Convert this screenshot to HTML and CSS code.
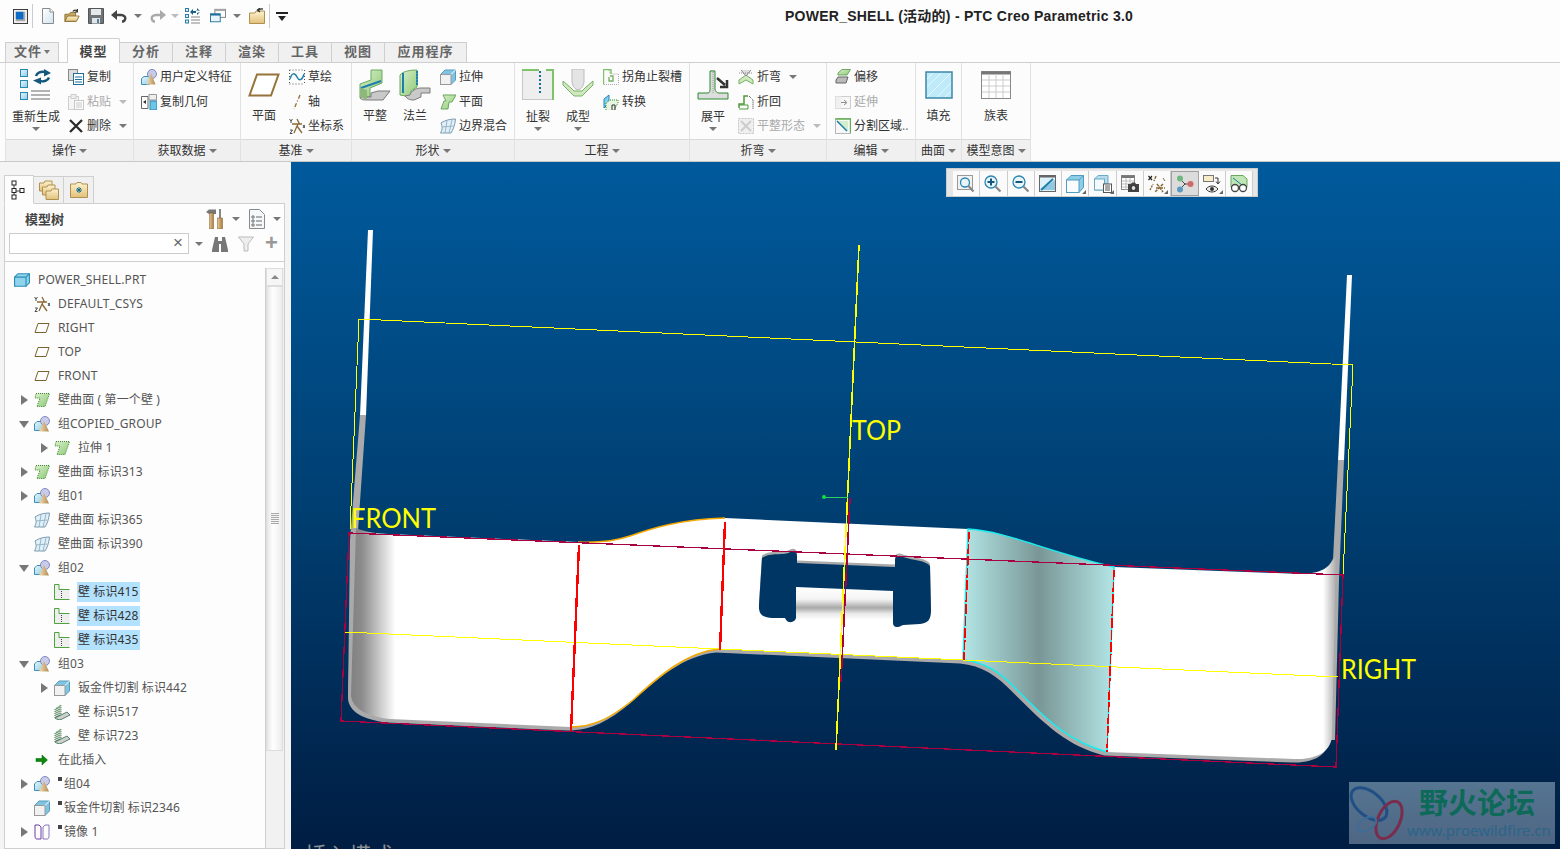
FILE: index.html
```html
<!DOCTYPE html>
<html lang="zh-CN">
<head>
<meta charset="utf-8">
<title>POWER_SHELL - PTC Creo Parametric 3.0</title>
<link rel="stylesheet" href="styles.css">
</head>
<body>
<svg class="defs" width="0" height="0" aria-hidden="true">
  <defs>
    <linearGradient id="gCube" x1="0" y1="0" x2="1" y2="1"><stop offset="0" stop-color="#e8f6fc"/><stop offset="1" stop-color="#8ecbe6"/></linearGradient>
    <linearGradient id="gFolder" x1="0" y1="0" x2="0" y2="1"><stop offset="0" stop-color="#fdf3d0"/><stop offset="1" stop-color="#e2c078"/></linearGradient>
    <linearGradient id="gGreen" x1="0" y1="0" x2="1" y2="1"><stop offset="0" stop-color="#d8f0c8"/><stop offset="1" stop-color="#8fc878"/></linearGradient>
    <linearGradient id="gCone" x1="0" y1="0" x2="1" y2="0"><stop offset="0" stop-color="#f4e0b8"/><stop offset="1" stop-color="#b08a50"/></linearGradient>
    <linearGradient id="gDoc" x1="0" y1="0" x2="1" y2="1"><stop offset="0" stop-color="#fff"/><stop offset="1" stop-color="#cfe4f0"/></linearGradient>
    <linearGradient id="gTool" x1="0" y1="0" x2="1" y2="0"><stop offset="0" stop-color="#e8c890"/><stop offset="1" stop-color="#a87c40"/></linearGradient>

    <symbol id="q-win" viewBox="0 0 16 16"><rect x=".5" y=".5" width="15" height="15" fill="#eee" stroke="#333"/><rect x="3" y="3" width="10" height="10" fill="#aaa"/><rect x="3" y="3" width="8" height="8" fill="#0a6cc8"/></symbol>
    <symbol id="q-new" viewBox="0 0 16 16"><path d="M2.5.5H10L13.5 4V15.5H2.5Z" fill="url(#gDoc)" stroke="#8a8a8a"/><path d="M10 .5V4H13.5" fill="#fff" stroke="#8a8a8a"/></symbol>
    <symbol id="q-open" viewBox="0 0 18 16"><path d="M1 6H6L7 4H13V14H1Z" fill="#c8a860" stroke="#8a6c30"/><path d="M1 14L4 8H17L14 14Z" fill="url(#gFolder)" stroke="#8a6c30"/><path d="M10 3C11 1 14 1 15 3M15 0V3.5H12" fill="none" stroke="#333" stroke-width="1.4"/></symbol>
    <symbol id="q-save" viewBox="0 0 16 16"><path d="M.5.5H15.5V15.5H.5Z" fill="#6f7478" stroke="#555"/><rect x="3" y="1" width="10" height="6" fill="#e6e9ec"/><rect x="4" y="10" width="8" height="5.5" fill="#dfe6ea"/><rect x="9" y="11" width="2" height="4" fill="#5a7f99"/></symbol>
    <symbol id="q-undo" viewBox="0 0 16 12"><path d="M4 5H10C13 5 15 7 14 9.500 13.500 11 12 11.500 11 11.500" fill="none" stroke="#444" stroke-width="2.400"/><path d="M6 0V10L0 5Z" fill="#444"/></symbol>
    <symbol id="q-redo" viewBox="0 0 16 12"><path d="M12 5H6C3 5 1 7 2 9.500 2.500 11 4 11.500 5 11.500" fill="none" stroke="#aaa" stroke-width="2.400"/><path d="M10 0V10L16 5Z" fill="#aaa"/></symbol>
    <symbol id="q-regen" viewBox="0 0 16 16"><g fill="#d6eef8" stroke="#2b7da8"><rect x=".5" y=".5" width="3" height="3"/><rect x=".5" y="6.500" width="3" height="3"/><rect x=".5" y="12" width="3" height="3"/></g><path d="M6 9H15M6 12H15M6 15H15" stroke="#888"/><path d="M5 4L8 1V3H11V5H8V7ZM15 3L12 0V2H10M15 4L12 7V5" fill="#1f5f85"/></symbol>
    <symbol id="q-wins" viewBox="0 0 18 16"><rect x="5.500" y=".5" width="12" height="9" fill="#fff" stroke="#777"/><rect x="5.500" y=".5" width="12" height="2" fill="#aaa"/><rect x=".5" y="5.500" width="11" height="9" fill="#e8f4fa" stroke="#1f6f9a"/><rect x=".5" y="5.500" width="11" height="2" fill="#1f6f9a"/></symbol>
    <symbol id="q-close" viewBox="0 0 16 16"><path d="M.5 5H6L7 3H15.500V15.500H.5Z" fill="url(#gFolder)" stroke="#b09050"/><path d="M9 3.500C9 1.500 11 .8 14 1M11 0L8.500 2L11 4" fill="none" stroke="#333" stroke-width="1.300"/></symbol>

    <symbol id="b-regen" viewBox="0 0 32 32"><g fill="url(#gCube)" stroke="#2b86b2"><rect x=".5" y=".5" width="7" height="7"/><rect x=".5" y="11.500" width="7" height="7"/><rect x=".5" y="23.500" width="7" height="7"/></g><path d="M11 22H30M11 26H30M11 30H30" stroke="#999" stroke-width="1.500"/><path d="M16 7C17 3.500 21 2 25 3M29 8.500C28 11.500 24 13 19 12" fill="none" stroke="#14587f" stroke-width="2.500"/><path d="M24 0L31 4 24 7.500ZM21 8.500L13 11.500 21 15.500Z" fill="#14587f"/></symbol>
    <symbol id="b-plane" viewBox="0 0 32 24"><path d="M9 1.500H30.500L23 22.500H1.500Z" fill="#fff" stroke="#96733a" stroke-width="2"/></symbol>
    <symbol id="b-flat" viewBox="0 0 32 32"><path d="M1 28V15L12 11V1H23V14L11 19V28Z" fill="url(#gGreen)" stroke="#6aa860"/><path d="M2 19L22 12" stroke="#1d7fb0" stroke-width="2"/><path d="M1 28C1 31 5 31 8 31H24L31 22H19L12 24V28Z" fill="#c9c9c9" stroke="#7a7a7a"/><path d="M1 19V28L8 31V21Z" fill="#8db87a"/></symbol>
    <symbol id="b-flange" viewBox="0 0 32 32"><path d="M1 26V6C4 2 12 1 18 1V18L12 22V28Z" fill="url(#gGreen)" stroke="#6aa860"/><path d="M4 4V24M18 2V16" stroke="#1d7fb0" stroke-width="2"/><path d="M6 27C9 31 12 31 15 31L22 28V24H31V19H22C17 19 12 22 11 26Z" fill="#c9c9c9" stroke="#7a7a7a"/><path d="M18 4V18" stroke="#7dbb6b" stroke-dasharray="1 2"/></symbol>
    <symbol id="b-rip" viewBox="0 0 32 32"><path d="M.5 1.500V30.500H30.500V1.500" fill="#eee" stroke="#999" stroke-dasharray="1 1"/><path d="M0 1H17M24 1H31V31" fill="none" stroke="#7ec26a" stroke-width="2"/><path d="M18 2V26" stroke="#16708f" stroke-width="2" stroke-dasharray="2 2"/></symbol>
    <symbol id="b-form" viewBox="0 0 32 32"><path d="M10 0H22V13C21 18 19 20 16 21 13 20 11 18 10 13Z" fill="#e4e4e4" stroke="#bbb"/><path d="M1 12L9 19 12 22H20L23 19 31 12V16L23 24 20 27H12L9 24 1 16Z" fill="#cfe8bf" stroke="#76b265"/></symbol>
    <symbol id="b-unbend" viewBox="0 0 32 32"><path d="M13 1H18V20C18 22 20 24 22 24H31V30H1V24H10C12 24 13 23 13 21Z" fill="#ddd"/><path d="M1 24H11C13 24 13 21 13 20V2H18V20C18 22 20 24 22 24H31M1 30H31V24M1 24V30" fill="none" stroke="#2f8a35"/><path d="M16 3V24" stroke="#999" stroke-dasharray="1 1"/><path d="M20 9L28 16M30 11V18H23" fill="none" stroke="#333" stroke-width="2.500"/></symbol>
    <symbol id="b-fill" viewBox="0 0 28 28"><rect x="1" y="1" width="26" height="26" fill="#bfeaf8" stroke="#3c87a8" stroke-width="1.500"/><path d="M2 26L26 2M2 16L16 2M12 26L26 12M2 8L8 2M20 26L26 20" stroke="#e6f8fd"/></symbol>
    <symbol id="b-table" viewBox="0 0 30 28"><rect x=".5" y=".5" width="29" height="27" fill="#fff" stroke="#888"/><rect x=".5" y=".5" width="29" height="3" fill="#777"/><path d="M8 3V27M15 3V27M22 3V27M1 9H29M1 15H29M1 21H29" stroke="#ccc"/></symbol>

    <symbol id="s-copy" viewBox="0 0 16 16"><rect x=".5" y=".5" width="9" height="11" fill="#ddd" stroke="#888"/><rect x="5.500" y="4.500" width="10" height="11" fill="#fff" stroke="#1f6f9a"/><path d="M7 8H14M7 10.500H14M7 13H14" stroke="#1f6f9a"/></symbol>
    <symbol id="s-paste" viewBox="0 0 16 16" opacity=".45"><rect x=".5" y="2.500" width="10" height="13" fill="#eee" stroke="#999"/><rect x="3" y=".5" width="5" height="4" fill="#ddd" stroke="#999"/><rect x="6.500" y="6.500" width="9" height="9" fill="#fff" stroke="#888"/><path d="M8 9H14M8 11H14M8 13H14" stroke="#888"/></symbol>
    <symbol id="s-del" viewBox="0 0 16 16"><path d="M2 2L14 14M14 2L2 14" stroke="#2b2b2b" stroke-width="2.300"/></symbol>
    <symbol id="s-udf" viewBox="0 0 16 16"><path d="M.5 9.500L3 7.500H11V13.500L8 15.500H.5Z" fill="url(#gCube)" stroke="#3a8fb8"/><circle cx="11" cy="5" r="4.500" fill="#c8cbe8" stroke="#8088c0"/><path d="M10 4L5.500 15.500H14.500Z" fill="url(#gCone)"/></symbol>
    <symbol id="s-cgeo" viewBox="0 0 16 16"><path d="M.5 2.500H7V14.500H.5Z" fill="#fff" stroke="#666"/><path d="M2 8L5 6V10Z" fill="#333"/><path d="M8 .5H15.500V6H8Z" fill="#eee" stroke="#999"/><rect x="9" y="7" width="7" height="9" fill="#6cc6e8" stroke="#2b86b2"/></symbol>
    <symbol id="s-sketch" viewBox="0 0 16 16"><path d="M1 10C3 3 6 4 8 8 10 12 13 12 15 5" fill="none" stroke="#1f7ea8" stroke-width="1.500"/><path d="M.5 1H15.500M.5 15H15.500" stroke="#555" stroke-dasharray="1 2"/><path d="M.5 1V15M15.500 1V15" stroke="#555" stroke-dasharray="1 2"/></symbol>
    <symbol id="s-axis" viewBox="0 0 16 16"><path d="M11 1L5 15" stroke="#96733a" stroke-width="1.400" stroke-dasharray="4 2 1 2"/></symbol>
    <symbol id="s-csys" viewBox="0 0 16 16"><path d="M8 1L10 5 8 8 5 15M8 8L13 15M3 6H13" fill="none" stroke="#8a6a34" stroke-width="1.300"/><path d="M.5 1L2 3 3.500 1M2 3V5M14 7L16 10M16 7L14 10M1 12H3.500L1 15.500H3.500" fill="none" stroke="#222" stroke-width=".8"/></symbol>
    <symbol id="s-ext" viewBox="0 0 16 16"><path d="M.5 5.500L5 1H15.500V11L11 15.500H.5Z" fill="#7fc4e0" stroke="#5a9cbc"/><rect x=".5" y="5.500" width="10.500" height="10" fill="#f1f1f1" stroke="#999"/><path d="M11 5.500L15.500 1" stroke="#fff"/></symbol>
    <symbol id="s-pln" viewBox="0 0 16 16"><path d="M3 1H16L12 8H9L8 15H1L4 7H6Z" fill="url(#gGreen)" stroke="#69a85c"/></symbol>
    <symbol id="s-bnd" viewBox="0 0 16 16"><path d="M1 5C5 2 11 1 15.500 1 15 7 13 12 11 15 7 15 3 15 .5 15 3 11 2 8 1 5Z" fill="#e0f0fa" stroke="#7a9aae"/><path d="M7 3L5 15M12 2L9 15M2 9L13 8" stroke="#9ab6c6"/></symbol>
    <symbol id="s-corner" viewBox="0 0 16 16"><path d="M.5.5H6V3L10 5H15.500V15.500H.5Z" fill="#fafafa" stroke="#aaa" stroke-dasharray="1 1"/><path d="M.5.5H8V5M.5.5V15.500" fill="none" stroke="#7ec26a" stroke-width="1.400"/><path d="M6 8V12H10V7H7" fill="none" stroke="#76ad5f" stroke-width="1.300"/></symbol>
    <symbol id="s-conv" viewBox="0 0 16 16"><path d="M1 5L6 1V9L1 14Z" fill="#7fd0ee" stroke="#2b86b2"/><path d="M3 16V9L7 6H15V9L11 16" fill="#e8f5e0" stroke="#2f8a35" stroke-dasharray="1 1"/><path d="M9 16V11H12V16" fill="none" stroke="#333"/></symbol>
    <symbol id="s-bend" viewBox="0 0 16 16"><path d="M1 15V11L8 6 15 11V15L8 11Z" fill="#cfe8bf" stroke="#76b265"/><path d="M3 1L8 7 13 1" fill="#ddd" stroke="#888"/><path d="M1 4L15 4" stroke="#888" stroke-dasharray="1 1"/></symbol>
    <symbol id="s-back" viewBox="0 0 16 16"><path d="M1 14V10H6V2H10" fill="none" stroke="#4d9b3c" stroke-width="1.500"/><path d="M1 15H10V11H1" fill="none" stroke="#4d9b3c"/><path d="M11 2L15 6V15" fill="none" stroke="#333" stroke-dasharray="1 1"/></symbol>
    <symbol id="s-flatst" viewBox="0 0 16 16" opacity=".4"><rect x=".5" y=".5" width="15" height="15" fill="#ddd" stroke="#777" stroke-dasharray="2 1"/><path d="M3 3L13 13M13 3L3 13" stroke="#888" stroke-width="2"/></symbol>
    <symbol id="s-offset" viewBox="0 0 16 16"><path d="M3 4L7 .5H15.500L12 6H3Z" fill="url(#gGreen)" stroke="#6aa860"/><path d="M1 11L3 8H13L11 14H1Z" fill="#bbb" stroke="#666"/></symbol>
    <symbol id="s-extend" viewBox="0 0 16 16" opacity=".55"><rect x=".5" y="2.500" width="15" height="12" fill="#f4f4f4" stroke="#aaa"/><rect x=".5" y="2.500" width="6" height="12" fill="#e8e8e8"/><path d="M6 8.500H11M9 6L12 8.500 9 11" fill="none" stroke="#333"/></symbol>
    <symbol id="s-split" viewBox="0 0 16 16"><rect x=".5" y=".5" width="15" height="15" fill="#f7f7f7" stroke="#777" stroke-dasharray="1 1"/><path d="M.5 1H15.500V15" fill="none" stroke="#62b050" stroke-width="1.400"/><path d="M3 3H13V13Z" fill="#c3e8bb" opacity=".7"/><path d="M2 3L12 13" stroke="#1a7da3" stroke-width="1.500"/></symbol>

    <symbol id="p-tree" viewBox="0 0 16 20"><path d="M3 5V17M3 11H9" stroke="#444"/><g fill="#fff" stroke="#222"><rect x="1" y="1" width="4" height="4"/><rect x="1" y="8.500" width="4" height="4"/><rect x="1" y="15" width="4" height="4"/><rect x="9" y="8.500" width="4" height="4"/></g></symbol>
    <symbol id="p-folders" viewBox="0 0 20 20"><path d="M.5 3H5L6 1H13V11H.5Z" fill="url(#gFolder)" stroke="#b09050"/><path d="M3.500 7H8L9 5H16V15H3.500Z" fill="url(#gFolder)" stroke="#b09050"/><path d="M7 11H12L13 9H19.500V19.500H7Z" fill="url(#gFolder)" stroke="#b09050"/></symbol>
    <symbol id="p-fav" viewBox="0 0 18 16"><path d="M.5 2H6L7 .5H11L12 2H17.500V15.500H.5Z" fill="url(#gFolder)" stroke="#b09050"/><path d="M9 5V11M6 8H12M7 6L11 10M11 6L7 10" stroke="#136a8a"/></symbol>
    <symbol id="p-tools" viewBox="0 0 18 20"><path d="M0 3L3 .5H10V5H3Z" fill="#777"/><rect x="3.500" y="4" width="4" height="16" fill="url(#gTool)" stroke="#7a5a28" stroke-width=".5"/><rect x="13" y="0" width="2" height="9" fill="#888"/><rect x="11.500" y="9" width="5" height="11" fill="url(#gTool)" stroke="#7a5a28" stroke-width=".5"/></symbol>
    <symbol id="p-notes" viewBox="0 0 16 20"><path d="M.5.5H10.500L15.500 5.500V19.500H.5Z" fill="#f4f8fb" stroke="#8a8a8a"/><g fill="none" stroke="#666"><circle cx="4" cy="8" r="1.200"/><circle cx="4" cy="12" r="1.200"/><circle cx="4" cy="16" r="1.200"/><path d="M7 8H13M7 12H13M7 16H13"/></g></symbol>
    <symbol id="p-bino" viewBox="0 0 16 16"><path d="M3 1H6V5H10V1H13L16 14V16H9V8H7V16H0V14Z" fill="#777"/></symbol>
    <symbol id="p-filter" viewBox="0 0 16 16"><path d="M.5 1H15.500L10 8V15L6 15V8Z" fill="#eee" stroke="#bbb"/></symbol>

    <symbol id="t-part" viewBox="0 0 14 12"><path d="M.5 3.500L3.500.5H13.500V8.500L10.500 11.500H.5Z" fill="#8fd4ec" stroke="#2c8db5"/><path d="M.5 3.500H10.500V11.500M10.500 3.500L13.500.5" fill="none" stroke="#2c8db5"/></symbol>
    <symbol id="t-plane" viewBox="0 0 16 10"><path d="M4 .5H15L12 9.500H1Z" fill="#fdfdfd" stroke="#7a6230"/></symbol>
    <symbol id="t-wall" viewBox="0 0 16 14"><path d="M2 .5H15.500L11 13.500H3L6 5H1Z" fill="url(#gGreen)" stroke="#3c8a30" stroke-dasharray="1 1"/></symbol>
    <symbol id="t-grp" viewBox="0 0 16 16"><path d="M.5 8L3 5.500H10V12L7.500 14.500H.5Z" fill="url(#gCube)" stroke="#3a8fb8"/><circle cx="11" cy="5" r="4.500" fill="#c8cbe8" stroke="#8088c0"/><path d="M10 5L5 15.500H15Z" fill="url(#gCone)"/></symbol>
    <symbol id="t-flat" viewBox="0 0 16 16"><path d="M.5.5H4.500V5H15.500V15.500H.5Z" fill="#eee"/><path d="M.5 15.500V.5H5V5.500H15.500M.5 15.500H15.500" fill="none" stroke="#4da43a"/><path d="M7.500 7V15" stroke="#444" stroke-dasharray="1 1"/></symbol>
    <symbol id="t-w2" viewBox="0 0 16 16"><path d="M1 14V5L7 1V11L1 14Z" fill="#c8d0c4" stroke="#3f7f4a" stroke-dasharray="1 1"/><path d="M1 14C3 15.500 5 16 7 15.500L16 11 13 8 7 11Z" fill="#cfcfcf" stroke="#55806a"/><path d="M3 4V13M5 3V12" stroke="#2f7a48" stroke-dasharray="1 1"/></symbol>
    <symbol id="t-arrow" viewBox="-2 -2 16 16"><path d="M0 4.500H6V1L11.500 6 6 11V7.500H0Z" fill="#0a8a0a" stroke="#055a05" stroke-width=".5"/></symbol>
    <symbol id="t-mirror" viewBox="0 0 16 16"><path d="M1 1H5L7 3V15H2.500C1.500 15 1 13 1 12Z" fill="none" stroke="#6d3aa8"/><path d="M15 1H11L9 3V15H13.500C14.500 15 15 13 15 12Z" fill="none" stroke="#8a74c0"/></symbol>

    <symbol id="v-fit" viewBox="0 0 18 18"><rect x=".5" y=".5" width="15" height="14" fill="#f2f2f2" stroke="#999"/><circle cx="8" cy="7.500" r="4.500" fill="#e8f6fc" stroke="#2b86b2" stroke-width="1.300"/><path d="M11.500 11L16.500 16.500" stroke="#888" stroke-width="2.200"/></symbol>
    <symbol id="v-in" viewBox="0 0 18 18"><circle cx="7" cy="7" r="6" fill="#e8f6fc" stroke="#2b86b2" stroke-width="1.300"/><path d="M3.500 7H10.500M7 3.500V10.500" stroke="#14587f" stroke-width="2"/><path d="M11.500 11.500L16.500 16.500" stroke="#888" stroke-width="2.200"/></symbol>
    <symbol id="v-out" viewBox="0 0 18 18"><circle cx="7" cy="7" r="6" fill="#e8f6fc" stroke="#2b86b2" stroke-width="1.300"/><path d="M3.500 7H10.500" stroke="#14587f" stroke-width="2"/><path d="M11.500 11.500L16.500 16.500" stroke="#888" stroke-width="2.200"/></symbol>
    <symbol id="v-rep" viewBox="0 0 18 18"><rect x=".5" y=".5" width="16" height="16" fill="#dff1f8" stroke="#666"/><rect x=".5" y=".5" width="16" height="2" fill="#666"/><path d="M2 15H16V5" fill="#4ca6cc" opacity=".55"/><path d="M2 15L14 4" stroke="#1f7ea8" stroke-width="2"/></symbol>
    <symbol id="v-cube" viewBox="0 0 18 18"><path d="M.5 5L5 .5H17.500V12.500L13 17.500H.5Z" fill="#8fcde6" stroke="#4e9cbf"/><rect x=".5" y="5" width="12.500" height="12.500" fill="#f8fcfd" stroke="#4e9cbf"/><path d="M13 5L17.500 .5" stroke="#4e9cbf"/></symbol>
    <symbol id="v-cubel" viewBox="0 0 18 18"><path d="M.5 4L4 .5H14V9H10V15H.5Z" fill="#b4dcec" stroke="#6aaac6"/><rect x=".5" y="4" width="10" height="11" fill="#f4fafc" stroke="#6aaac6"/><rect x="9.500" y="9" width="8" height="8.500" fill="#fff" stroke="#555"/><path d="M11 11H16M11 13H16M11 15H16" stroke="#555"/></symbol>
    <symbol id="v-cam" viewBox="0 0 18 18"><rect x=".5" y=".5" width="13" height="14" fill="#fff" stroke="#888"/><rect x=".5" y=".5" width="13" height="2.500" fill="#777"/><path d="M1 6H13M1 9H13M1 12H13M5 3V15M9 3V15" stroke="#bbb"/><path d="M7 9H10L11 7.500H14L15 9H18V17H7Z" fill="#444"/><circle cx="12.500" cy="13" r="2.500" fill="#ddd" stroke="#222"/></symbol>
    <symbol id="v-dat" viewBox="0 0 18 18"><path d="M8 1L6 6M15 9L7 17M9 9L15 17M8 13H17" stroke="#8a6a34" stroke-width="1.500" stroke-dasharray="3 1"/><path d="M.5 1L4 5M4 1L.5 5" stroke="#222" stroke-width="1.200"/><path d="M15 3L17 6" stroke="#8a6a34"/><path d="M2 15L5 9" stroke="#8a6a34" stroke-width="1.400" stroke-dasharray="2 1"/></symbol>
    <symbol id="v-node" viewBox="0 0 18 18"><path d="M4 4L9 9 14 9M4 14L9 9" stroke="#444" fill="none"/><circle cx="4" cy="3.500" r="3" fill="#6db87a"/><circle cx="14.500" cy="9" r="3" fill="#cf6a6a"/><circle cx="4" cy="14.500" r="3" fill="#5a9ac0"/></symbol>
    <symbol id="v-eye" viewBox="0 0 18 18"><rect x=".5" y=".5" width="10" height="6" fill="#f7edc8" stroke="#777"/><path d="M12 3H15V8M13 6.500L15 9 17 6.500" fill="none" stroke="#333"/><path d="M3 14C6 10 12 10 15 14 12 18 6 18 3 14Z" fill="#eee" stroke="#333"/><circle cx="9" cy="14" r="2" fill="#333"/></symbol>
    <symbol id="v-glass" viewBox="0 0 18 18"><path d="M1 .5H13L17 4V12H1Z" fill="#bfe6b4" stroke="#6aa860"/><path d="M3 3L12 10" stroke="#1a7da3"/><g fill="#fff" stroke="#444" stroke-width="1.300"><circle cx="5" cy="13" r="3.500"/><circle cx="13" cy="13" r="3.500"/></g></symbol>
  </defs>
</svg>

<header class="titlebar">
  <div class="quick">
    <span class="qb"><svg class="i15"><use href="#q-win"/></svg></span>
    <span class="qsep"></span>
    <span class="qb qaft"><svg class="i16"><use href="#q-new"/></svg></span>
    <span class="qb"><svg class="i16"><use href="#q-open"/></svg></span>
    <span class="qb"><svg class="i16"><use href="#q-save"/></svg></span>
    <span class="qb qn"><svg class="i16"><use href="#q-undo"/></svg></span>
    <span class="qc qa"><i class="caret"></i></span>
    <span class="qb qn qm"><svg class="i16"><use href="#q-redo"/></svg></span>
    <span class="qc qs"><i class="caret lite"></i></span>
    <span class="qb"><svg class="i16"><use href="#q-regen"/></svg></span>
    <span class="qb qm"><svg class="i16"><use href="#q-wins"/></svg></span>
    <span class="qc"><i class="caret"></i></span>
    <span class="qb qm"><svg class="i16"><use href="#q-close"/></svg></span>
    <span class="qsep"></span>
    <span class="qc qlast"><i class="caret dark"></i></span>
  </div>
  <div class="title">POWER_SHELL (活动的) - PTC Creo Parametric 3.0</div>
</header>

<nav class="tabs">
  <div class="tab file">文件<i class="caret"></i></div>
  <div class="tab active">模型</div>
  <div class="tab">分析</div>
  <div class="tab">注释</div>
  <div class="tab">渲染</div>
  <div class="tab">工具</div>
  <div class="tab">视图</div>
  <div class="tab wide">应用程序</div>
</nav>

<section class="ribbon">
  <div class="group">
    <div class="tools">
      <div class="big w48"><div class="big-ico"><svg class="i32"><use href="#b-regen"/></svg></div><span>重新生成</span><i class="caret"></i></div>
      <div class="col">
        <div class="sm"><svg class="i16"><use href="#s-copy"/></svg>复制</div>
        <div class="sm off"><svg class="i16"><use href="#s-paste"/></svg>粘贴<i class="caret lite"></i></div>
        <div class="sm"><svg class="i16"><use href="#s-del"/></svg>删除<i class="caret"></i></div>
      </div>
    </div>
    <div class="glabel">操作<i class="caret"></i></div>
  </div>
  <div class="group">
    <div class="tools pl8">
      <div class="col">
        <div class="sm"><svg class="i16"><use href="#s-udf"/></svg>用户定义特征</div>
        <div class="sm"><svg class="i16"><use href="#s-cgeo"/></svg>复制几何</div>
      </div>
    </div>
    <div class="glabel">获取数据<i class="caret"></i></div>
  </div>
  <div class="group">
    <div class="tools pl8">
      <div class="big w32"><div class="big-ico"><svg class="i32x24"><use href="#b-plane"/></svg></div><span class="up">平面</span></div>
      <div class="col">
        <div class="sm"><svg class="i16"><use href="#s-sketch"/></svg>草绘</div>
        <div class="sm"><svg class="i16"><use href="#s-axis"/></svg>轴</div>
        <div class="sm"><svg class="i16"><use href="#s-csys"/></svg>坐标系</div>
      </div>
    </div>
    <div class="glabel">基准<i class="caret"></i></div>
  </div>
  <div class="group">
    <div class="tools pl8">
      <div class="big w32"><div class="big-ico"><svg class="i32"><use href="#b-flat"/></svg></div><span class="up">平整</span></div>
      <div class="big w32 ml8"><div class="big-ico"><svg class="i32"><use href="#b-flange"/></svg></div><span class="up">法兰</span></div>
      <div class="col">
        <div class="sm"><svg class="i16"><use href="#s-ext"/></svg>拉伸</div>
        <div class="sm"><svg class="i16"><use href="#s-pln"/></svg>平面</div>
        <div class="sm"><svg class="i16"><use href="#s-bnd"/></svg>边界混合</div>
      </div>
    </div>
    <div class="glabel">形状<i class="caret"></i></div>
  </div>
  <div class="group">
    <div class="tools pl8">
      <div class="big w32"><div class="big-ico"><svg class="i32"><use href="#b-rip"/></svg></div><span>扯裂</span><i class="caret"></i></div>
      <div class="big w32 ml8"><div class="big-ico"><svg class="i32"><use href="#b-form"/></svg></div><span>成型</span><i class="caret"></i></div>
      <div class="col">
        <div class="sm"><svg class="i16"><use href="#s-corner"/></svg>拐角止裂槽</div>
        <div class="sm"><svg class="i16"><use href="#s-conv"/></svg>转换</div>
      </div>
    </div>
    <div class="glabel">工程<i class="caret"></i></div>
  </div>
  <div class="group">
    <div class="tools pl8">
      <div class="big w32"><div class="big-ico"><svg class="i32"><use href="#b-unbend"/></svg></div><span>展平</span><i class="caret"></i></div>
      <div class="col">
        <div class="sm"><svg class="i16"><use href="#s-bend"/></svg>折弯<i class="caret"></i></div>
        <div class="sm"><svg class="i16"><use href="#s-back"/></svg>折回</div>
        <div class="sm off"><svg class="i16"><use href="#s-flatst"/></svg>平整形态<i class="caret lite"></i></div>
      </div>
    </div>
    <div class="glabel">折弯<i class="caret"></i></div>
  </div>
  <div class="group">
    <div class="tools pl8">
      <div class="col flush">
        <div class="sm"><svg class="i16"><use href="#s-offset"/></svg>偏移</div>
        <div class="sm off"><svg class="i16"><use href="#s-extend"/></svg>延伸</div>
        <div class="sm"><svg class="i16"><use href="#s-split"/></svg>分割区域<span class="dots">..</span></div>
      </div>
    </div>
    <div class="glabel">编辑<i class="caret"></i></div>
  </div>
  <div class="group">
    <div class="tools center">
      <div class="big w32"><div class="big-ico"><svg class="i28"><use href="#b-fill"/></svg></div><span class="up">填充</span></div>
    </div>
    <div class="glabel">曲面<i class="caret"></i></div>
  </div>
  <div class="group">
    <div class="tools center">
      <div class="big w32"><div class="big-ico"><svg class="i30x28"><use href="#b-table"/></svg></div><span class="up">族表</span></div>
    </div>
    <div class="glabel">模型意图<i class="caret"></i></div>
  </div>
</section>

<main class="main">
  <aside class="sidebar">
    <div class="ptabs">
      <div class="ptab on"><svg class="i16x20"><use href="#p-tree"/></svg></div>
      <div class="ptab"><svg class="i20"><use href="#p-folders"/></svg></div>
      <div class="ptab"><svg class="i18x16"><use href="#p-fav"/></svg></div>
    </div>
    <div class="panel">
      <div class="phead">
        <span class="ptitle">模型树</span>
        <svg class="i18x20"><use href="#p-tools"/></svg><i class="caret hc1"></i>
        <svg class="i16x20 hn"><use href="#p-notes"/></svg><i class="caret hc2"></i>
      </div>
      <div class="psearch">
        <div class="sbox"><span class="sx">×</span></div>
        <i class="caret sc"></i>
        <svg class="i16 sb"><use href="#p-bino"/></svg>
        <svg class="i16 sf"><use href="#p-filter"/></svg>
        <span class="splus">+</span>
      </div>
      <div class="pbody">
        <div class="tree">
          <div class="row l0"><svg class="ti"><use href="#t-part"/></svg><span class="tx">POWER_SHELL.PRT</span></div>
          <div class="row l1"><i class="ar"></i><svg class="ti"><use href="#s-csys"/></svg><span class="tx">DEFAULT_CSYS</span></div>
          <div class="row l1"><i class="ar"></i><svg class="ti"><use href="#t-plane"/></svg><span class="tx">RIGHT</span></div>
          <div class="row l1"><i class="ar"></i><svg class="ti"><use href="#t-plane"/></svg><span class="tx">TOP</span></div>
          <div class="row l1"><i class="ar"></i><svg class="ti"><use href="#t-plane"/></svg><span class="tx">FRONT</span></div>
          <div class="row l1"><i class="ar r"></i><svg class="ti"><use href="#t-wall"/></svg><span class="tx">壁曲面 ( 第一个壁 )</span></div>
          <div class="row l1"><i class="ar d"></i><svg class="ti"><use href="#t-grp"/></svg><span class="tx">组COPIED_GROUP</span></div>
          <div class="row l2"><i class="ar r"></i><svg class="ti"><use href="#t-wall"/></svg><span class="tx">拉伸 1</span></div>
          <div class="row l1"><i class="ar r"></i><svg class="ti"><use href="#t-wall"/></svg><span class="tx">壁曲面 标识313</span></div>
          <div class="row l1"><i class="ar r"></i><svg class="ti"><use href="#t-grp"/></svg><span class="tx">组01</span></div>
          <div class="row l1"><i class="ar"></i><svg class="ti"><use href="#s-bnd"/></svg><span class="tx">壁曲面 标识365</span></div>
          <div class="row l1"><i class="ar"></i><svg class="ti"><use href="#s-bnd"/></svg><span class="tx">壁曲面 标识390</span></div>
          <div class="row l1"><i class="ar d"></i><svg class="ti"><use href="#t-grp"/></svg><span class="tx">组02</span></div>
          <div class="row l2"><i class="ar"></i><svg class="ti"><use href="#t-flat"/></svg><span class="tx sel">壁 标识415</span></div>
          <div class="row l2"><i class="ar"></i><svg class="ti"><use href="#t-flat"/></svg><span class="tx sel">壁 标识428</span></div>
          <div class="row l2"><i class="ar"></i><svg class="ti"><use href="#t-flat"/></svg><span class="tx sel">壁 标识435</span></div>
          <div class="row l1"><i class="ar d"></i><svg class="ti"><use href="#t-grp"/></svg><span class="tx">组03</span></div>
          <div class="row l2"><i class="ar r"></i><svg class="ti"><use href="#s-ext"/></svg><span class="tx">钣金件切割 标识442</span></div>
          <div class="row l2"><i class="ar"></i><svg class="ti"><use href="#t-w2"/></svg><span class="tx">壁 标识517</span></div>
          <div class="row l2"><i class="ar"></i><svg class="ti"><use href="#t-w2"/></svg><span class="tx">壁 标识723</span></div>
          <div class="row l1"><i class="ar"></i><svg class="ti"><use href="#t-arrow"/></svg><span class="tx">在此插入</span></div>
          <div class="row l1"><i class="ar r"></i><svg class="ti"><use href="#t-grp"/></svg><span class="tx"><b class="mk"></b>组04</span></div>
          <div class="row l1"><i class="ar"></i><svg class="ti"><use href="#s-ext"/></svg><span class="tx"><b class="mk"></b>钣金件切割 标识2346</span></div>
          <div class="row l1"><i class="ar r"></i><svg class="ti"><use href="#t-mirror"/></svg><span class="tx"><b class="mk"></b>镜像 1</span></div>
          <div class="row l1"><i class="ar"></i><svg class="ti"><use href="#t-grp"/></svg></div>
        </div>
        <div class="scroll">
          <div class="sup"><i class="caret upw"></i></div>
          <div class="sthumb"><span class="grip"></span></div>
        </div>
      </div>
    </div>
  </aside>

  <div class="viewport">
    <svg class="canvas" viewBox="291 162 1269 687">
      <defs>
        <linearGradient id="sheetG" gradientUnits="userSpaceOnUse" x1="350" y1="0" x2="1338" y2="0">
          <stop offset="0" stop-color="#808080"/><stop offset=".012" stop-color="#8c8c8c"/><stop offset=".046" stop-color="#ffffff"/><stop offset=".985" stop-color="#ffffff"/><stop offset="1" stop-color="#a0a0a0"/>
        </linearGradient>
        <linearGradient id="tealG" gradientUnits="userSpaceOnUse" x1="965" y1="0" x2="1113" y2="0">
          <stop offset="0" stop-color="#b2e4e4"/><stop offset=".5" stop-color="#7a9696"/><stop offset="1" stop-color="#b2e4e4"/>
        </linearGradient>
        <linearGradient id="barG" gradientUnits="userSpaceOnUse" x1="0" y1="588" x2="0" y2="620">
          <stop offset="0" stop-color="#fff"/><stop offset=".35" stop-color="#f4f4f4"/><stop offset=".62" stop-color="#a8a8a8"/><stop offset=".8" stop-color="#e8e8e8"/><stop offset="1" stop-color="#fff"/>
        </linearGradient>
        <path id="sheet" d="M356 528C360 530 370 533 388 534L578 542C600 543 615 541 630 536C650 529 680 519 725 518L968 529C1010 532 1040 550 1114 567L1300 574C1320 574 1330 568 1336 555L1332 735C1332 750 1318 760 1295 759L1107 752C1070 742 1050 723 1017 690C1000 672 985 662 963 660L719 649C687 652 660 675 633 700C612 717 595 727 570 727L390 719C365 716 352 708 351 695Z"/>
        <path id="hole" d="M762 558C770 552 785 556 790 552C794 550 797 552 797 556V563L895 567V560C895 556 899 555 903 557C915 561 925 560 930 566L931 610C931 620 928 623 920 624L903 625C898 628 893 628 893 623V591L796 587V618C795 623 787 624 785 618C770 618 758 620 759 605Z"/>
      </defs>

      <polygon class="wall-w" points="368,230 373,230 366,416 360,416"/>
      <polygon class="wall-g" points="360,415 366,415 356,560 355,697 348,697 350,540"/>
      <polygon class="wall-w" points="1347,275 1352,275 1344,461 1338,461"/>
      <polygon class="wall-g" points="1338,460 1344,460 1339,580 1335,740 1327,740 1332,580"/>

      <use href="#sheet" class="rim" transform="translate(-3 3.500)"/>
      <use href="#sheet" class="sheet"/>
      <path class="teal" d="M968 529C1010 532 1040 550 1114 567L1107 752C1070 742 1050 723 1017 690C1000 672 985 662 963 660Z"/>
      <use href="#hole" class="rim" transform="translate(0 -2.500)"/>
      <polygon class="bar" points="796,587 893,591 893,623 795,619"/>
      <use href="#hole" class="holefill"/>

      <path class="orange" d="M578 542C600 543 615 541 630 536C650 529 680 519 725 518M719 649C687 652 660 675 633 700C612 717 595 727 570 727"/>
      <g class="crisp">
        <path class="ln yl" d="M359 319L1353 365M359 319L350 530M1353 365L1343 575"/>
        <path class="ln cr" d="M349 533L1343 575L1336 767L341 721Z"/>
        <path class="ln yl" d="M345 632L1338 677"/>
        <path class="ln yl w2" d="M859 245L836 750"/>
        <path class="ln cr w2" d="M850 498L841 682"/>
        <path class="ln rd" d="M579 545L571 731M725 522L720 650"/>
        <path class="ln rd dash" d="M969 532L964 660M1114 570L1107 752"/>
        <path class="ln gr" d="M824 497L848 498"/>
      </g>
      <circle class="dot" cx="824" cy="497" r="2"/>
      <text class="dlabel" x="351" y="528" textLength="85" lengthAdjust="spacingAndGlyphs">FRONT</text>
      <text class="dlabel" x="852" y="440" textLength="49" lengthAdjust="spacingAndGlyphs">TOP</text>
      <text class="dlabel" x="1341" y="679" textLength="75" lengthAdjust="spacingAndGlyphs">RIGHT</text>
    </svg>

    <div class="vbar">
      <span class="vb"><svg class="i18"><use href="#v-fit"/></svg></span>
      <span class="vb"><svg class="i18"><use href="#v-in"/></svg></span>
      <span class="vb"><svg class="i18"><use href="#v-out"/></svg></span>
      <span class="vb"><svg class="i18"><use href="#v-rep"/></svg></span>
      <span class="vb mn"><svg class="i18"><use href="#v-cube"/></svg></span>
      <span class="vb mn"><svg class="i18"><use href="#v-cubel"/></svg></span>
      <span class="vb"><svg class="i18"><use href="#v-cam"/></svg></span>
      <span class="vb mn"><svg class="i18"><use href="#v-dat"/></svg></span>
      <span class="vb on"><svg class="i18"><use href="#v-node"/></svg></span>
      <span class="vb mn"><svg class="i18"><use href="#v-eye"/></svg></span>
      <span class="vb"><svg class="i18"><use href="#v-glass"/></svg></span>
    </div>

    <div class="mode">插入模式</div>

    <div class="mark">
      <svg class="mlogo" viewBox="0 0 60 62">
        <ellipse cx="20" cy="22" rx="21" ry="12" transform="rotate(40 20 22)" fill="none" stroke="#1f4f85" stroke-width="3"/>
        <ellipse cx="40" cy="38" rx="11" ry="20" transform="rotate(25 40 38)" fill="none" stroke="#7a2c4c" stroke-width="3"/>
        <ellipse cx="18" cy="42" rx="10" ry="6" transform="rotate(-30 18 42)" fill="none" stroke="#3f6c95" stroke-width="2"/>
      </svg>
      <div class="mtext"><div class="mcn">野火论坛</div><div class="men">www.proewildfire.cn</div></div>
    </div>
  </div>
</main>
</body>
</html>
```
FILE: styles.css
```css
* { box-sizing: border-box; }
html, body { margin: 0; padding: 0; height: 849px; overflow: hidden; }
body {
  width: 1560px;
  display: flex;
  flex-direction: column;
  background: #fdfdfd;
  color: #333;
  font: 12px/16px "Noto Sans", "Noto Sans CJK SC", sans-serif;
}
.defs { position: absolute; }
svg { display: block; flex: none; overflow: hidden; }
.i15 { width: 15px; height: 15px; }
.i16 { width: 16px; height: 16px; }
.i18 { width: 18px; height: 18px; }
.i20 { width: 20px; height: 20px; }
.i28 { width: 28px; height: 28px; }
.i32 { width: 32px; height: 32px; }
.i32x24 { width: 32px; height: 24px; }
.i30x28 { width: 30px; height: 28px; }
.i16x20 { width: 16px; height: 20px; }
.i18x16 { width: 18px; height: 16px; }
.i18x20 { width: 18px; height: 20px; }

.caret {
  display: inline-block;
  flex: none;
  width: 0;
  height: 0;
  border-left: 4px solid transparent;
  border-right: 4px solid transparent;
  border-top: 4px solid #777;
}
.caret.lite { border-top-color: #bbb; }
.caret.dark { border-top-color: #222; border-left-width: 4.5px; border-right-width: 4.5px; border-top-width: 5px; }

/* title bar */
.titlebar { height: 38px; flex: none; display: flex; align-items: flex-start; }
.quick { width: 785px; height: 32px; padding-left: 8px; display: flex; align-items: center; flex: none; }
.qb { width: 24px; height: 24px; flex: none; display: flex; align-items: center; justify-content: center; }
.qb.qn { width: 22px; }
.qb.qaft { margin-left: 3px; }
.qb.qm { margin-left: 1px; }
.qc { width: 14px; flex: none; display: flex; justify-content: center; }
.qc.qa { width: 16px; }
.qc.qs { width: 12px; }
.qsep { width: 1px; height: 24px; background: #ccc; flex: none; }
.qlast { margin-left: 6px; width: 12px; border-top: 2px solid #222; padding-top: 2px; }
.title {
  height: 32px;
  line-height: 32px;
  font-family: "Liberation Sans", "Noto Sans CJK SC", sans-serif;
  font-size: 14px;
  letter-spacing: .25px;
  font-weight: 700;
  color: #222;
  white-space: nowrap;
}

/* ribbon tabs */
.tabs { height: 24px; flex: none; display: flex; align-items: flex-end; padding-left: 5px; position: relative; z-index: 1; }
.tab {
  width: 53px;
  height: 20px;
  background: #f0f0f0;
  border: 1px solid #cfcfcf;
  border-left: 0;
  border-bottom: 0;
  color: #666;
  font: 700 13px/16px "Noto Sans CJK SC", sans-serif;
  letter-spacing: 1px;
  text-align: center;
}
.tab.file { width: 54px; margin-right: 8px; border-left: 1px solid #cfcfcf; display: flex; align-items: flex-start; justify-content: center; gap: 2px; }
.tab.file .caret { border-left-width: 3px; border-right-width: 3px; margin-top: 7px; }
.tab.active { width: 53px; height: 25px; margin-bottom: -1px; background: #fdfdfd; border-left: 1px solid #cfcfcf; border-radius: 2px 2px 0 0; color: #444; line-height: 24px; }
.tab.wide { width: 82px; }

/* ribbon */
.ribbon {
  height: 100px;
  flex: none;
  display: grid;
  grid-template-columns: 129px 107px 111px 163px 175px 137px 89px 46px 69px;
  padding-left: 5px;
  border-top: 1px solid #cfcfcf;
  border-bottom: 1px solid #c8c8c8;
  background: #fcfcfc;
}
.group { display: flex; flex-direction: column; border-right: 1px solid #e2e2e2; }
.group:first-child { border-left: 1px solid #e2e2e2; }
.tools { height: 76px; padding-top: 2px; display: flex; align-items: flex-start; padding-left: 6px; }
.tools.pl8 { padding-left: 7px; }
.tools.center { justify-content: center; padding-left: 0; }
.glabel {
  flex: 1;
  background: #f0f0f0;
  border-top: 1px solid #d8d8d8;
  display: flex;
  align-items: center;
  justify-content: center;
  gap: 3px;
  color: #333;
}
.big { display: flex; flex-direction: column; align-items: center; flex: none; }
.w48 { width: 48px; }
.w32 { width: 32px; }
.ml8 { margin-left: 8px; }
.big-ico { height: 40px; display: flex; align-items: center; justify-content: center; }
.big > span { margin-top: 4px; line-height: 16px; white-space: nowrap; }
.big > span.up { margin-top: 3px; }
.big > .caret { margin-top: 2px; }
.col { display: flex; flex-direction: column; margin-left: 8px; }
.col.flush { margin-left: 0; }
.group:nth-child(1) .col { margin-left: 8px; }
.group:nth-child(2) .col { margin-left: 0; }
.group:nth-child(3) .col { margin-left: 9px; }
.group:nth-child(4) .col { margin-left: 9px; }
.group:nth-child(5) .col { margin-left: 9px; }
.group:nth-child(6) .col { margin-left: 9px; }
.group:nth-child(7) .tools { padding-left: 8px; }
.sm { height: 24.500px; display: flex; align-items: center; gap: 3px; white-space: nowrap; }
.sm .caret { margin-left: 5px; }
.sm.off { color: #aaa; }
.dots { margin-left: -3px; color: #777; }

/* main area */
.main { flex: 1; min-height: 0; display: flex; }
.sidebar { width: 291px; flex: none; display: flex; flex-direction: column; padding: 13px 6px 0 4px; background: #f4f4f4; overflow: hidden; }
.ptabs { height: 29px; flex: none; display: flex; align-items: flex-end; margin-bottom: -1px; position: relative; z-index: 1; }
.ptab { width: 30px; height: 28px; background: #f0f0f0; border: 1px solid #cfcfcf; border-left: 0; display: flex; align-items: center; justify-content: center; }
.ptab.on { height: 29px; background: #fdfdfd; border-left: 1px solid #cfcfcf; border-bottom-color: #fdfdfd; }
.panel { flex: 1; min-height: 0; background: #fdfdfd; border: 1px solid #cfcfcf; display: flex; flex-direction: column; }
.phead { height: 29px; flex: none; display: flex; align-items: center; padding: 1px 0 0 20px; }
.ptitle { margin-right: auto; font: 700 13px/16px "Noto Sans CJK SC", sans-serif; color: #444; }
.hc1 { margin-left: 8px; }
.hn { margin-left: 9px; }
.hc2 { margin-left: 8px; margin-right: 3px; }
.psearch { height: 29px; flex: none; display: flex; align-items: flex-start; padding: 0 0 0 4px; border-bottom: 1px solid #cfcfcf; position: relative; }
.sbox { width: 180px; height: 21px; background: #fff; border: 1px solid #ccc; display: flex; justify-content: flex-end; padding-right: 5px; }
.sx { font: 17px/18px "Liberation Sans", sans-serif; color: #666; }
.sc { margin: 9px 0 0 6px; }
.sb { margin: 3px 0 0 9px; }
.sf { margin: 3px 0 0 10px; }
.splus { margin-left: 11px; font: 700 22px/20px "Liberation Sans", sans-serif; color: #999; }
.pbody { flex: 1; min-height: 0; display: flex; overflow: hidden; }
.tree { flex: 1; padding-top: 6px; min-width: 0; }
.row { height: 24px; display: flex; align-items: center; white-space: nowrap; color: #555; }
.row.l0 { padding-left: 9px; }
.row.l1 { padding-left: 15px; }
.row.l2 { padding-left: 35px; }
.ar { width: 14px; flex: none; display: block; }
.ar.r::before { content: ""; display: block; width: 0; height: 0; border-left: 7px solid #777; border-top: 5px solid transparent; border-bottom: 5px solid transparent; margin-left: 1px; }
.ar.d::before { content: ""; display: block; width: 0; height: 0; border-top: 7px solid #777; border-left: 5px solid transparent; border-right: 5px solid transparent; margin-left: -1px; }
.ti { width: 16px; height: 16px; margin-right: 8px; }
.tx { line-height: 20px; letter-spacing: .12px; }
.tx.sel { background: #b3e2ff; color: #333; margin-left: -1px; padding: 0 1px; }
.mk { display: inline-block; width: 4px; height: 4px; background: #444; margin-right: 2px; vertical-align: 7px; }
.scroll { width: 19px; flex: none; margin-top: 6px; background: #f1f1f1; border-left: 1px solid #cfcfcf; padding-right: 1px; display: flex; flex-direction: column; }
.sup { height: 18px; flex: none; background: #f6f6f6; border: 1px solid #ddd; display: flex; align-items: center; justify-content: center; }
.upw { transform: rotate(180deg); border-top-color: #888; }
.sthumb { height: 465px; flex: none; background: linear-gradient(90deg, #e6e6e6, #fff 40%, #ececec); border: 1px solid #ddd; display: flex; align-items: center; justify-content: center; }
.grip { width: 8px; height: 11px; background: repeating-linear-gradient(#aaa 0 1px, #f4f4f4 1px 2px); }

/* viewport */
.viewport { flex: 1; min-width: 0; position: relative; overflow: hidden; background: linear-gradient(#005a9c, #003f72 50%, #001d42); }
.canvas { width: 100%; height: 100%; }
.wall-w { fill: #fff; }
.wall-g { fill: #aaa; }
.rim { fill: #aaa; }
.sheet { fill: url(#sheetG); }
.teal { fill: url(#tealG); stroke: #18ecec; stroke-width: 1.500; }
.holefill { fill: #003664; }
.bar { fill: url(#barG); }
.orange { fill: none; stroke: #f5a800; stroke-width: 1.500; }
.crisp { shape-rendering: crispEdges; }
.ln { fill: none; stroke-width: 1; }
.yl { stroke: #ffff00; }
.cr { stroke: #a80040; stroke-width: 1.300; }
.w2 { stroke-width: 1.600; }
.rd { stroke: #ff0000; stroke-width: 2.400; }
.dash { stroke-width: 1.600; stroke-dasharray: 10 2; }
.gr { stroke: #30d060; }
.dot { fill: #10e040; }
.dlabel { font: 400 27px "Lato", "Liberation Sans", sans-serif; fill: #ffff00; }

.vbar { position: absolute; left: 655px; top: 6px; height: 29px; width: 312px; padding: 2px 5px 0 6px; background: #e6e6e6; border: 1px solid #ccc; display: flex; }
.vb { width: 27.300px; flex: none; height: 25px; background: #fbfbfb; border-right: 1px solid #ccc; display: flex; align-items: center; justify-content: center; position: relative; }
.vb.on { background: #dcdcdc; border: 1px solid #a0a0a0; }
.vb.mn::after { content: ""; position: absolute; right: 2px; bottom: 2px; width: 0; height: 0; border-left: 4px solid transparent; border-bottom: 4px solid #666; }

.mode { position: absolute; left: 14px; top: 678px; font: 22px/26px "Noto Sans CJK SC", sans-serif; color: #8a8f96; white-space: nowrap; }

.mark { position: absolute; left: 1058px; top: 620px; width: 206px; height: 62px; background: linear-gradient(#557591, #4e6684); display: flex; overflow: hidden; }
.mlogo { width: 60px; height: 62px; }
.mtext { display: flex; flex-direction: column; }
.mcn { margin: 4px 0 0 10px; font: 700 29px/30px "Noto Sans CJK SC", sans-serif; color: #0d6a58; white-space: nowrap; }
.men { margin: 5px 0 0 -2px; font: 15px/18px "Noto Sans", sans-serif; color: #2b6589; white-space: nowrap; }
```
